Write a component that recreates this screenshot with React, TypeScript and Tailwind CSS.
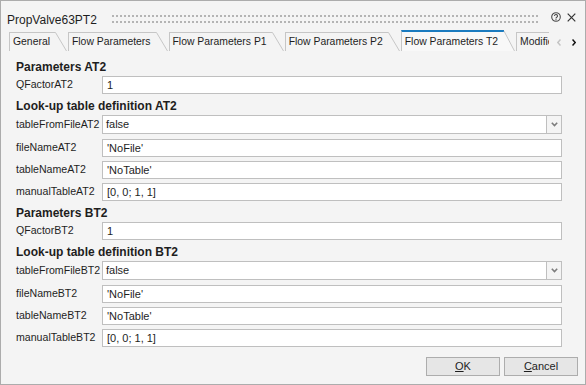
import type { ReactNode } from 'react'

// Tab captions as the strip shows them; the last one is clipped by the scroll arrows.
const TABS = ['General', 'Flow Parameters', 'Flow Parameters P1', 'Flow Parameters P2', 'Flow Parameters T2', 'Modifiers']
const ACTIVE_TAB = 'Flow Parameters T2'

/** Dotted drag grip between the title and the caption buttons. */
function Grip(): React.JSX.Element {
  return (
    <svg className="mt-[14px] ml-[15px] block h-[9px] flex-1">
      <defs>
        <pattern id="grip" width="4" height="6" patternUnits="userSpaceOnUse">
          <rect x="0" y="0" width="2" height="2" fill="#b4b4b4" />
        </pattern>
      </defs>
      <rect width="100%" height="9" fill="url(#grip)" />
    </svg>
  )
}

function TitleBar(): React.JSX.Element {
  return (
    <div className="flex h-[29px] shrink-0 items-start pr-[9px] pl-[6px]">
      <div className="mt-[12px] text-[12px] leading-[14px] whitespace-nowrap">PropValve63PT2</div>
      <Grip />
      <svg width="10" height="10" viewBox="0 0 10 10" className="mt-[11px] ml-[11px] block shrink-0">
        <circle cx="5" cy="5" r="4.3" fill="none" stroke="#4a4a4a" strokeWidth="1.1" />
        <path d="M3.5 4 A1.5 1.5 0 1 1 5.7 5.3 C5.2 5.6 5 5.9 5 6.4" fill="none" stroke="#4a4a4a" strokeWidth="1.1" />
        <circle cx="5" cy="7.7" r="0.6" fill="#4a4a4a" />
      </svg>
      <svg width="9" height="9" viewBox="0 0 9 9" className="mt-[12px] ml-[6px] block shrink-0">
        <path d="M0.7 0.7 L8.3 8.3 M8.3 0.7 L0.7 8.3" stroke="#333" strokeWidth="1.2" />
      </svg>
    </div>
  )
}

function Tab({ label, active }: { label: string; active: boolean }): React.JSX.Element {
  const h = active ? 21 : 19
  return (
    <div className={`flex shrink-0 ${active ? 'h-[21px]' : 'h-[19px]'}`}>
      <div
        className={`flex items-center border-l border-[#c6c6c6] pr-[5px] pl-[3px] text-[10.4px] whitespace-nowrap ${
          active ? 'border-t-2 border-t-[#1b7bbf] bg-[#f8f8f8]' : 'border-t'
        }`}
      >
        {label}
      </div>
      <svg width="12" height={h} className="block shrink-0">
        {active ? (
          <>
            <path d={`M0 0 L1 0 L12 ${h} L0 ${h} Z`} fill="#f8f8f8" />
            <path d="M0 1 H1" stroke="#1b7bbf" strokeWidth="2" />
            <path d={`M1 1 L11.5 ${h}`} stroke="#c6c6c6" strokeWidth="1" fill="none" />
          </>
        ) : (
          <path d={`M0 0.5 H0.5 L11.5 ${h}`} stroke="#c6c6c6" strokeWidth="1" fill="none" />
        )}
      </svg>
    </div>
  )
}

function TabStrip(): React.JSX.Element {
  return (
    <div className="flex h-[21px] shrink-0 items-end">
      <div className="flex min-w-0 flex-1 items-end gap-[1px] overflow-hidden pl-[8px]">
        {TABS.map((t) => (
          <Tab key={t} label={t} active={t === ACTIVE_TAB} />
        ))}
      </div>
      <div className="flex h-full w-[36px] shrink-0 items-center gap-[11px] pt-[3px] pl-[8px]">
        <svg width="4" height="7" viewBox="0 0 4 7" className="block">
          <path d="M3.5 0.5 L0.8 3.5 L3.5 6.5" stroke="#c4c4c4" strokeWidth="1.5" fill="none" />
        </svg>
        <svg width="4" height="7" viewBox="0 0 4 7" className="block">
          <path d="M0.5 0.5 L3.2 3.5 L0.5 6.5" stroke="#111" strokeWidth="1.5" fill="none" />
        </svg>
      </div>
    </div>
  )
}

function Heading({ children }: { children: ReactNode }): React.JSX.Element {
  return <div className="h-[21px] pt-[5px] text-[12px] leading-[14px] font-bold">{children}</div>
}

function Field({
  label,
  value,
  combo = false,
  className = ''
}: {
  label: string
  value: string
  combo?: boolean
  className?: string
}): React.JSX.Element {
  return (
    <div className={`flex items-center ${combo ? 'h-[19px]' : 'h-[18px]'} ${className}`}>
      <div className="w-[86px] shrink-0 text-[10.6px] whitespace-nowrap">{label}</div>
      {combo ? (
        <div className="flex h-full w-[460px] border border-[#bfbfbf] bg-white">
          <div className="flex flex-1 items-center pl-[3px] text-[11px]">{value}</div>
          <div className="flex w-[15px] items-center justify-center border-l border-[#bfbfbf] bg-[#f4f4f4]">
            <svg width="7" height="5" viewBox="0 0 7 5" className="block">
              <path d="M0.8 0.8 L3.5 3.5 L6.2 0.8" stroke="#7c7c7c" strokeWidth="1.6" fill="none" />
            </svg>
          </div>
        </div>
      ) : (
        <div className="flex h-full w-[460px] items-center border border-[#bfbfbf] bg-white pl-[4px] text-[11px]">
          {value}
        </div>
      )}
    </div>
  )
}

function Section({ id }: { id: 'AT2' | 'BT2' }): React.JSX.Element {
  return (
    <>
      <Heading>Parameters {id}</Heading>
      <Field label={`QFactor${id}`} value="1" />
      <Heading>Look-up table definition {id}</Heading>
      <Field label={`tableFromFile${id}`} value="false" combo />
      <Field label={`fileName${id}`} value="'NoFile'" className="mt-[5px]" />
      <Field label={`tableName${id}`} value="'NoTable'" className="mt-[4px]" />
      <Field label={`manualTable${id}`} value="[0, 0; 1, 1]" className="mt-[4px]" />
    </>
  )
}

function DialogButton({ children }: { children: ReactNode }): React.JSX.Element {
  return (
    <div className="flex h-[19px] w-[74px] items-center justify-center border border-[#adadad] bg-[#e6e6e6] text-[11px]">
      {children}
    </div>
  )
}

export default function App(): React.JSX.Element {
  return (
    <div className="flex h-[385px] w-[586px] flex-col overflow-hidden border border-[#acacac] bg-[#f4f4f4] font-['Liberation_Sans',Arial,sans-serif] text-[#1e1e1e]">
      <TitleBar />
      <TabStrip />
      <div className="flex flex-col pt-[4px] pl-[15px]">
        <Section id="AT2" />
        <Section id="BT2" />
      </div>
      <div className="mt-[10px] flex justify-end gap-[4px] pr-[7px]">
        <DialogButton>
          <span className="underline underline-offset-[1px]">O</span>K
        </DialogButton>
        <DialogButton>
          <span className="underline underline-offset-[1px]">C</span>ancel
        </DialogButton>
      </div>
    </div>
  )
}
